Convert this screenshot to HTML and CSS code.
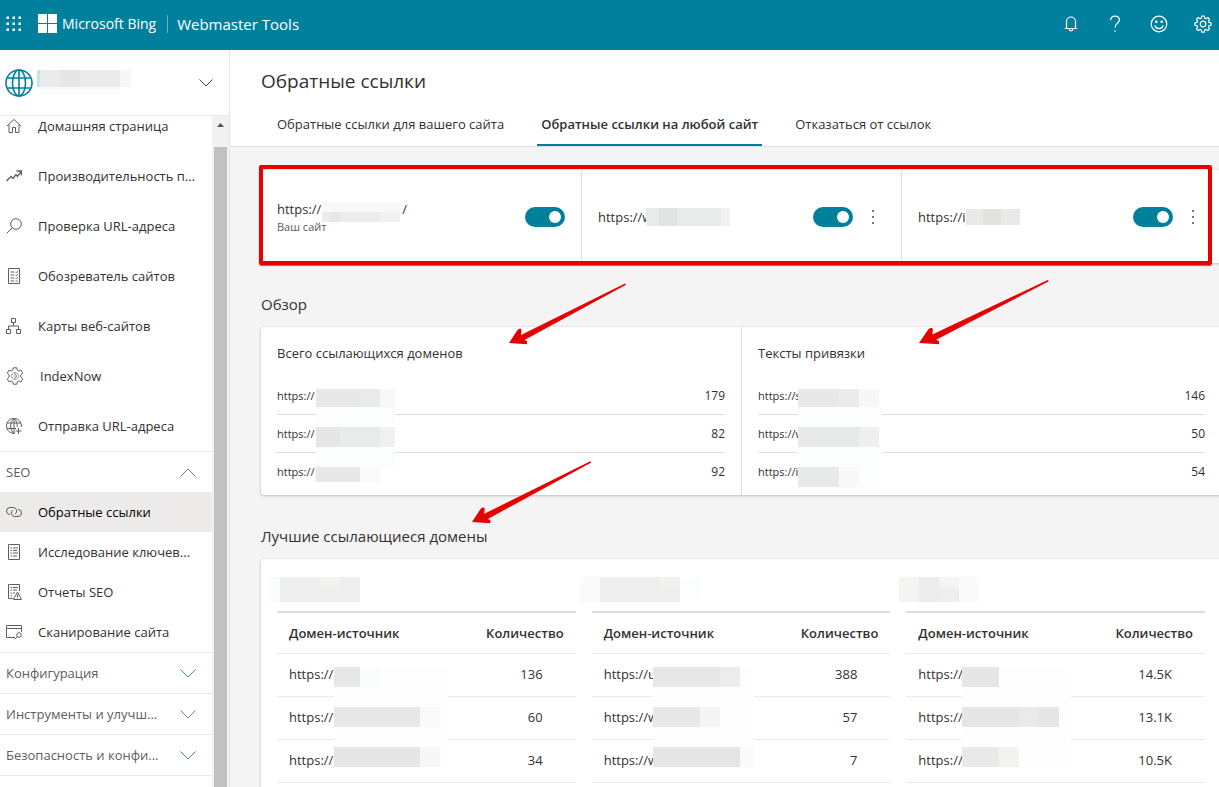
FILE: index.html
```html
<!DOCTYPE html>
<html lang="ru">
<head>
  <meta charset="UTF-8" />
  <meta name="viewport" content="width=device-width, initial-scale=1.0"/>
  <title>Обратные ссылки — Webmaster Tools</title>
  <link rel="stylesheet" href="styles.css">
</head>
<body>
  <header class="topbar">
    <button class="waffle" aria-label="Меню приложений">
      <svg width="16" height="16" viewBox="0 0 16 16" fill="#fff">
        <path d="M.5.5h2.500v2.500H.5zM6.500.5H9v2.500H6.500zM12.500.5H15v2.500h-2.500zM.5 6.500h2.500V9H.5zM6.500 6.500H9V9H6.500zM12.500 6.500H15V9h-2.500zM.5 12.500h2.500V15H.5zM6.500 12.500H9V15H6.500zM12.500 12.500H15V15h-2.500z"/>
      </svg>
    </button>
    <a class="brand" href="#">
      <svg width="19" height="19" viewBox="0 0 19 19" fill="#fff"><path d="M0 0h9v9H0zM10 0h9v9h-9zM0 10h9v9H0zM10 10h9v9h-9z"/></svg>
      <span class="brand-name">Microsoft Bing</span>
      <span class="product">Webmaster Tools</span>
    </a>
    <div class="top-actions">
      <button aria-label="Уведомления">
        <svg width="16" height="18" viewBox="0 0 16 18" fill="none" stroke="#fff" stroke-width="1.2"><path d="M3.5 13.5V6.5a4.5 4.5 0 0 1 9 0v7M1.8 13.5h12.4M6.2 14a1.8 1.8 0 0 0 3.6 0"/></svg>
      </button>
      <button aria-label="Справка">
        <svg width="12" height="18" viewBox="0 0 12 18" fill="none" stroke="#fff" stroke-width="1.2"><path d="M1.6 5.2C1.6 2.6 3.4 1.2 6 1.2s4.4 1.5 4.4 3.9C10.400 8.300 6 8.500 6 12.800M6 15.200v1.600"/></svg>
      </button>
      <button aria-label="Отзыв">
        <svg width="18" height="18" viewBox="0 0 18 18" fill="none" stroke="#fff" stroke-width="1.2"><circle cx="9" cy="9" r="7.800"/><path d="M4.800 10.500a4.400 4.400 0 0 0 8.400 0"/><circle cx="6.300" cy="6.800" r=".7" fill="#fff"/><circle cx="11.700" cy="6.800" r=".7" fill="#fff"/></svg>
      </button>
      <button aria-label="Параметры">
        <svg width="18" height="18" viewBox="0 0 18 18" fill="none" stroke="#fff" stroke-width="1.2" stroke-linejoin="round"><path d="M7.700 1h2.600l.4 2.100 1.300.6 1.800-1.200 1.800 1.800-1.200 1.800.6 1.300 2.100.4v2.500l-2.100.4-.6 1.300 1.200 1.800-1.800 1.800-1.800-1.200-1.300.6-.4 2.100H7.700l-.4-2.100-1.300-.6-1.800 1.200-1.800-1.800 1.200-1.800-.6-1.300-2.100-.4V7.800l2.100-.4.600-1.300-1.200-1.800 1.800-1.800 1.800 1.200 1.300-.6z"/><circle cx="9" cy="9" r="2.800"/></svg>
      </button>
    </div>
  </header>

  <div class="layout">
    <aside class="sidebar">
      <button class="site-picker" aria-label="Выбрать сайт">
        <svg width="28" height="28" viewBox="0 0 28 28" fill="none" stroke="#00809d" stroke-width="1.600"><circle cx="14" cy="14" r="13"/><ellipse cx="14" cy="14" rx="6.500" ry="13"/><path d="M14 1v26M2.500 9h23M2.500 19h23"/></svg>
        <svg class="site-name" width="94" height="26" viewBox="0 0 94 26"><path fill="#f7f7f7" d="M0 0h94v17H0z"/><path fill="#ebebeb" d="M0 0h83v17H0z"/><path fill="#e6e6e6" d="M23 0h20v17H23z"/><path fill="#c9e3ea" d="M0 0h3v17H0z"/><path fill="#fbfdfd" d="M3 17h80v8H3z"/></svg>
        <svg width="14" height="8" viewBox="0 0 14 8" fill="none" stroke="#444"><path d="M.5.5 7 7 13.500.5"/></svg>
      </button>

      <div class="nav-scroll">
        <nav class="nav">
          <a class="item" href="#">
            <svg width="16" height="16" viewBox="0 0 16 16"><path d="M1 8 8 1.500 15 8M3 6.500v8h3.500V9.500h3v5H13v-8"/></svg>
            Домашняя страница
          </a>
          <a class="item" href="#">
            <svg width="16" height="16" viewBox="0 0 16 16"><path stroke-width="1.300" d="M.5 13 5 8.500l2 2L10 6.500l1.500 2L15.500 3M10.500 3h5v4.500"/></svg>
            Производительность п...
          </a>
          <a class="item" href="#">
            <svg width="16" height="16" viewBox="0 0 16 16"><circle cx="10" cy="6" r="5.300"/><path d="M6.200 9.800.5 15.500"/></svg>
            Проверка URL-адреса
          </a>
          <a class="item" href="#">
            <svg width="16" height="16" viewBox="0 0 16 16"><path d="M2.500.5h11v15h-11zM4.500 4H8M4.500 7H8M4.500 10H8M4.500 13H8M9.500 4l.8.8L12 3.200M9.500 7l.8.8L12 6.200M9.500 10l.8.8L12 9.200M9.500 13h2"/></svg>
            Обозреватель сайтов
          </a>
          <a class="item" href="#">
            <svg width="16" height="16" viewBox="0 0 16 16"><path d="M5.500.5h4v4h-4zM.5 11.500h4v4h-4zM10.500 11.500h4v4h-4zM7.500 4.500V8M2.500 11.500V8h10v3.500"/></svg>
            Карты веб-сайтов
          </a>
          <a class="item" href="#">
            <svg width="18" height="18" viewBox="0 0 18 18"><path d="M7.200.8h3.600l.5 2.400 1.200.7 2.400-.8 1.800 3.100-1.900 1.700v2.200l1.900 1.700-1.800 3.100-2.400-.8-1.200.7-.5 2.400H7.200l-.5-2.400-1.200-.7-2.400.8-1.800-3.100 1.900-1.700V7.900L1.300 6.200l1.800-3.100 2.400.8 1.200-.7z"/><g stroke="#a19f9d"><circle cx="9" cy="9" r="3.500"/><path d="M9 5.500v7M9 7l2 2-2 2"/></g></svg>
            IndexNow
          </a>
          <a class="item" href="#">
            <svg width="16" height="16" viewBox="0 0 16 16"><path d="M15.300 9A7.500 7.500 0 1 0 9 15.300M8 .5c-4.500 4-4.500 11 0 15M8 .5c2.500 2.300 3.500 5 3.300 8.500M1 5h14M1 10.500h9M8 .5v15M12.500 10v6M9.500 13h6"/></svg>
            Отправка URL-адреса
          </a>

          <button class="group" aria-expanded="true">SEO
            <svg width="16" height="9" viewBox="0 0 16 9"><path d="M.5 8.500 8 1l7.500 7.500"/></svg>
          </button>
          <a class="item sub active" href="#">
            <svg width="16" height="16" viewBox="0 0 16 16"><path d="M4 10.500a3.500 3.500 0 0 1 0-7h3.500a3.500 3.500 0 0 1 1.500 6.500M12 5.500a3.500 3.500 0 0 1 0 7H8.500A3.500 3.500 0 0 1 7 6"/></svg>
            Обратные ссылки
          </a>
          <a class="item sub" href="#">
            <svg width="16" height="16" viewBox="0 0 16 16"><path d="M2.500.5h11v15h-11zM4.500 4H6M7 4h5M4.500 6.500H6M7 6.500h4M4.500 9H6M7 9h5M4.500 12H6M7 12h4"/></svg>
            Исследование ключев...
          </a>
          <a class="item sub" href="#">
            <svg width="16" height="16" viewBox="0 0 16 16"><path d="M13.500 7V.5h-11v14H7M4.500 3.500H6M7 3.500h5M4.500 6H6M7 6h4M4.500 9H6M7 9h2M4.500 12H6M11.500 8l4 7.500h-8zM11.500 10.500V13M11.500 13.500v1"/></svg>
            Отчеты SEO
          </a>
          <a class="item sub" href="#">
            <svg width="16" height="16" viewBox="0 0 16 16"><path d="M9 13.500H.5v-12h15V8M.5 4.500h15"/><circle cx="13" cy="11" r="2.300"/><path d="m11.300 12.700-2.600 2.600"/></svg>
            Сканирование сайта
          </a>

          <button class="group" aria-expanded="false">Конфигурация
            <svg class="blue" width="16" height="9" viewBox="0 0 16 9"><path d="M.5.5 8 8 15.500.5"/></svg>
          </button>
          <button class="group" aria-expanded="false">Инструменты и улучш...
            <svg width="16" height="9" viewBox="0 0 16 9"><path d="M.5.5 8 8 15.500.5"/></svg>
          </button>
          <button class="group" aria-expanded="false">Безопасность и конфи...
            <svg class="blue" width="16" height="9" viewBox="0 0 16 9"><path d="M.5.5 8 8 15.500.5"/></svg>
          </button>
        </nav>
        <div class="scrollbar">
          <svg width="7" height="4" viewBox="0 0 7 4" fill="#505050"><path d="M0 4 3.500 0 7 4z"/></svg>
          <div class="thumb"></div>
        </div>
      </div>
    </aside>

    <main class="main">
      <div class="page-head">
        <h1>Обратные ссылки</h1>
        <div class="tabs" role="tablist">
          <button class="tab" role="tab">Обратные ссылки для вашего сайта</button>
          <button class="tab selected" role="tab" aria-selected="true">Обратные ссылки на любой сайт</button>
          <button class="tab" role="tab">Отказаться от ссылок</button>
        </div>
      </div>

      <div class="content">
        <section class="card sites">
          <div class="site">
            <label class="site-url" for="site1">https://<svg class="gap" width="80" height="20" viewBox="0 0 80 20"><path fill="#f8f8f8" d="M0 0h78v10H0z"/><path fill="#ececec" d="M0 10h78v10H0z"/><path fill="#e6e6e6" d="M8 10h10v10H8z"/><path fill="#f1f1f1" d="M58 10h20v10H58z"/></svg>/
              <small>Ваш сайт</small>
            </label>
            <input class="toggle" type="checkbox" id="site1" checked>
          </div>
          <div class="site">
            <label class="site-url" for="site2">https://w
              <svg class="mask url-mask" width="84" height="18" viewBox="0 0 84 18"><path fill="#e9eaea" d="M0 0h84v18H0z"/><path fill="#e2e4e2" d="M13 0h18v18H13z"/><path fill="#f1f1f1" d="M75 0h9v18h-9z"/></svg>
            </label>
            <input class="toggle" type="checkbox" id="site2" checked>
            <button class="more" aria-label="Ещё"><svg width="2" height="14" viewBox="0 0 2 14" fill="#797775"><path d="M0 0h2v2H0zM0 6h2v2H0zM0 12h2v2H0z"/></svg></button>
          </div>
          <div class="site">
            <label class="site-url" for="site3">https://i
              <svg class="mask url-mask" width="54" height="18" viewBox="0 0 54 18"><path fill="#e9e9e9" d="M0 1h54v16H0z"/><path fill="#e2e3e1" d="M17 1h18v16H17z"/></svg>
            </label>
            <input class="toggle" type="checkbox" id="site3" checked>
            <button class="more" aria-label="Ещё"><svg width="2" height="14" viewBox="0 0 2 14" fill="#797775"><path d="M0 0h2v2H0zM0 6h2v2H0zM0 12h2v2H0z"/></svg></button>
          </div>
          <div class="highlight"></div>
        </section>

        <h2>Обзор</h2>
        <section class="card overview">
          <div class="summary">
            <h3>Всего ссылающихся доменов</h3>
            <ul>
              <li><span>https://</span><b>179</b></li>
              <li><span>https://</span><b>82</b></li>
              <li><span>https://</span><b>92</b></li>
            </ul>
            <svg class="mask list-mask" width="79" height="94" viewBox="0 0 79 94">
              <path fill="#fcfdfd" d="M0 0h79v80H0z"/>
              <path fill="#e8e8e8" d="M0 0h44v18H0z"/><path fill="#e9eaea" d="M44 0h20v18H44z"/><path fill="#f8f8f8" d="M64 0h15v18H64z"/>
              <path fill="#e6e6e6" d="M0 38h24v20H0z"/><path fill="#e9eaea" d="M24 38h40v20H24z"/><path fill="#f0f0f0" d="M64 38h15v20H64z"/>
              <path fill="#e8e8e8" d="M0 78h44v15H0z"/><path fill="#fafafa" d="M44 78h20v15H44z"/>
            </svg>
          </div>
          <div class="summary">
            <h3>Тексты привязки</h3>
            <ul>
              <li><span>https://s</span><b>146</b></li>
              <li><span>https://w</span><b>50</b></li>
              <li><span>https://i</span><b>54</b></li>
            </ul>
            <svg class="mask list-mask" width="86" height="99" viewBox="0 0 86 99">
              <path fill="#fcfdfd" d="M1 0h84v99H1z"/>
              <path fill="#e8e8e8" d="M1 0h41v18H1z"/><path fill="#edebea" d="M42 0h20v18H42z"/><path fill="#f7f7f7" d="M62 0h20v18H62z"/>
              <path fill="#e8e9e9" d="M1 38h61v20H1z"/><path fill="#efefef" d="M62 38h20v20H62z"/>
              <path fill="#e8e9e9" d="M1 78h41v20H1z"/><path fill="#f8f8f8" d="M42 78h20v20H42z"/>
            </svg>
          </div>
        </section>

        <h2>Лучшие ссылающиеся домены</h2>
        <section class="card domains">
          <div class="domain">
            <table>
              <thead><tr><th>Домен-источник</th><th>Количество</th></tr></thead>
              <tbody>
                <tr><td>https://</td><td>136</td></tr>
                <tr><td>https://</td><td>60</td></tr>
                <tr><td>https://</td><td>34</td></tr>
              </tbody>
            </table>
            <svg class="mask domain-mask" width="190" height="192" viewBox="0 0 190 192">
              <path fill="#fafbfb" d="M4 0h11v25H4z"/><path fill="#eee" d="M15 0h80v25H15z"/><path fill="#f2f2ef" d="M55 0h20v10H55z"/>
              <path fill="#fefefe" d="M69 90h114v101H69z"/>
              <path fill="#e7e7e7" d="M69 90h26v20H69z"/><path fill="#fbfdfd" d="M95 90h20v20H95z"/>
              <path fill="#e7e7e7" d="M69 130h86v20H69z"/><path fill="#f9f9f9" d="M155 130h20v20h-20z"/>
              <path fill="#e5e5e5" d="M69 170h86v20H69z"/><path fill="#f7f7f7" d="M155 170h20v20h-20z"/>
            </svg>
          </div>
          <div class="domain">
            <table>
              <thead><tr><th>Домен-источник</th><th>Количество</th></tr></thead>
              <tbody>
                <tr><td>https://u</td><td>388</td></tr>
                <tr><td>https://w</td><td>57</td></tr>
                <tr><td>https://w</td><td>7</td></tr>
              </tbody>
            </table>
            <svg class="mask domain-mask" width="190" height="192" viewBox="0 0 190 192">
              <path fill="#fafafa" d="M0 0h20v25H0z"/><path fill="#eee" d="M20 0h80v25H20z"/><path fill="#f2f2ef" d="M80 0h20v10H80z"/><path fill="#fcfdfd" d="M100 0h20v25h-20z"/>
              <path fill="#fefefe" d="M73 90h101v101H73z"/>
              <path fill="#e7e7e7" d="M73 90h67v20H73z"/><path fill="#ececec" d="M140 90h20v20h-20z"/>
              <path fill="#e8e8e8" d="M73 130h47v20H73z"/><path fill="#f5f5f5" d="M120 130h20v20h-20z"/>
              <path fill="#e5e5e5" d="M73 170h87v20H73z"/><path fill="#fafafa" d="M160 170h14v20h-14z"/>
            </svg>
          </div>
          <div class="domain">
            <table>
              <thead><tr><th>Домен-источник</th><th>Количество</th></tr></thead>
              <tbody>
                <tr><td>https://</td><td>14.5K</td></tr>
                <tr><td>https://</td><td>13.1K</td></tr>
                <tr><td>https://</td><td>10.5K</td></tr>
              </tbody>
            </table>
            <svg class="mask domain-mask" width="190" height="192" viewBox="0 0 190 192">
              <path fill="#f4f4f3" d="M5 0h60v25H5z"/><path fill="#ececec" d="M25 0h20v25H25z"/><path fill="#eee" d="M45 10h20v15H45z"/><path fill="#fafafa" d="M65 0h20v25H65z"/>
              <path fill="#fefefe" d="M68 90h109v101H68z"/>
              <path fill="#e6e6e6" d="M68 90h37v20H68z"/>
              <path fill="#e5e5e5" d="M68 130h97v20H68z"/><path fill="#eaeaea" d="M125 130h20v20h-20z"/>
              <path fill="#e8e9e9" d="M68 170h37v20H68z"/><path fill="#f2f2f0" d="M105 170h20v20h-20z"/>
            </svg>
          </div>
        </section>

        <svg class="arrows" width="800" height="260" viewBox="0 0 800 260">
          <defs>
            <path id="arrow" d="M0 0 8.500-13q3-3 4 0l-.5 5L116-59.500l1 1.200L15.500-3l2.500 1.200v3z"/>
          </defs>
          <use href="#arrow" x="248" y="73"/>
          <use href="#arrow" transform="translate(658 73) scale(1.110 1.060)"/>
          <use href="#arrow" transform="translate(211 252) scale(1.020 1.020)"/>
        </svg>
      </div>
    </main>
  </div>
</body>
</html>
```
FILE: styles.css
```css
* {
  box-sizing: border-box;
}

body {
  margin: 0;
  height: 100vh;
  display: flex;
  flex-direction: column;
  overflow: hidden;
  font-family: 'Segoe UI', 'Open Sans', sans-serif;
  font-size: 13px;
  line-height: 20px;
  color: #323130;
  background: #f4f4f4;
}

button {
  font: inherit;
  color: inherit;
  border: none;
  background: none;
  padding: 0;
  cursor: pointer;
}

a {
  color: inherit;
  text-decoration: none;
}

/* top bar */
.topbar {
  flex: none;
  height: 50px;
  display: flex;
  align-items: center;
  background: #00809d;
  color: #fff;
  padding-bottom: 3px;
}

.waffle {
  display: flex;
  padding: 0 16px 0 6px;
}

.brand {
  display: flex;
  align-items: center;
  font-weight: 500;
}

.brand-name {
  margin: 0 11px 0 5px;
  font-size: 14px;
}

.product {
  border-left: 1px solid #66b3c4;
  padding-left: 9px;
  font-size: 15px;
  line-height: 18px;
}

.top-actions {
  margin-left: auto;
  display: flex;
  gap: 12px;
}

.top-actions button {
  width: 32px;
  height: 32px;
  display: flex;
  align-items: center;
  justify-content: center;
}

/* sidebar */
.layout {
  flex: 1;
  display: flex;
  min-height: 0;
}

.sidebar {
  flex: none;
  width: 230px;
  display: flex;
  flex-direction: column;
  background: #fff;
  border-right: 1px solid #e6e6e6;
}

.site-picker {
  flex: none;
  height: 66px;
  display: flex;
  align-items: center;
  padding: 0 16px 0 5px;
  border-bottom: 1px solid #e6e6e6;
}

.site-name {
  margin: 0 auto 0 4px;
}

.nav-scroll {
  flex: 1;
  display: flex;
  min-height: 0;
  overflow: hidden;
}

.nav {
  flex: 1;
  margin-top: -15px;
}

.item {
  height: 50px;
  display: flex;
  align-items: center;
  gap: 16px;
  padding-left: 6px;
  white-space: nowrap;
}

.item svg {
  fill: none;
  stroke: #605e5c;
}

.sub {
  height: 40px;
}

.active {
  background: #edebe9;
  color: #000;
}

.group {
  width: 100%;
  height: 41px;
  display: flex;
  align-items: center;
  justify-content: space-between;
  padding: 0 16px 0 6px;
  border-top: 1px solid #e6e6e6;
  color: #605e5c;
  white-space: nowrap;
}

.group:last-child {
  height: 42px;
  border-bottom: 1px solid #e6e6e6;
}

.group svg {
  fill: none;
  stroke: #8a7f6a;
}

.group .blue {
  stroke: #4a8aa8;
}

.scrollbar {
  width: 17px;
  display: flex;
  flex-direction: column;
  align-items: center;
  background: #f1f1f1;
  padding-top: 7px;
}

.thumb {
  flex: 1;
  width: 13px;
  margin-top: 20px;
  background: #c1c1c1;
}

/* page */
.main {
  flex: 1;
  min-width: 0;
  overflow: hidden;
}

.page-head {
  height: 97px;
  background: #fff;
  border-bottom: 1px solid #dedede;
  padding: 18px 31px 0;
}

h1, h2, h3 {
  margin: 0;
  font-weight: 400;
}

h1 {
  font-size: 19px;
  line-height: 26px;
}

.tabs {
  display: flex;
  gap: 29px;
  padding: 10px 12px 0;
}

.tab {
  height: 42px;
  padding: 0 4px;
  border-bottom: 2px solid transparent;
}

.selected {
  font-weight: 600;
  border-color: #00809d;
}

.content {
  position: relative;
  min-width: 991px;
  padding: 23px 0 0 31px;
}

.card {
  background: #fff;
  border-radius: 2px;
  box-shadow: 0 0 1px rgba(0, 0, 0, 0.25), 0 1px 3px rgba(0, 0, 0, 0.2);
}

h2 {
  font-size: 15px;
  line-height: 24px;
  margin: 29px 0 11px;
}

.mask {
  position: absolute;
}

/* compared sites */
.sites {
  position: relative;
  display: grid;
  grid-template-columns: repeat(3, 1fr);
}

.site {
  height: 93px;
  display: flex;
  align-items: center;
  gap: 8px;
  padding: 0 16px;
}

.site + .site,
.summary + .summary {
  border-left: 1px solid #dedede;
}

.site-url {
  position: relative;
  flex: 1;
}

.site-url small {
  display: block;
  font-size: 11px;
  line-height: 16px;
  color: #605e5c;
}

.gap {
  vertical-align: -4px;
  margin: -4px 0 -4px 1px;
}

.url-mask {
  left: 48px;
  top: 1px;
}

.toggle {
  appearance: none;
  width: 40px;
  height: 20px;
  margin: 0;
  border-radius: 10px;
  background: #00809d;
  display: flex;
  align-items: center;
  justify-content: flex-end;
  padding: 0 4px;
}

.toggle::before {
  content: "";
  width: 12px;
  height: 12px;
  border-radius: 50%;
  background: #fff;
}

.more {
  width: 24px;
  height: 24px;
  display: flex;
  align-items: center;
  justify-content: center;
}

.highlight {
  position: absolute;
  inset: -5px 9px -2px -2px;
  border: 4px solid #e60000;
  border-radius: 2px;
  box-shadow: 0 1px 1px rgba(0, 0, 0, 0.5);
  pointer-events: none;
}

/* overview */
.overview {
  display: grid;
  grid-template-columns: 1fr 1fr;
}

.summary {
  position: relative;
  padding: 16px 16px 4px;
}

.summary h3 {
  font-size: 13px;
  margin-bottom: 14px;
}

.summary ul {
  list-style: none;
  margin: 0;
  padding: 0;
}

.summary li {
  height: 38px;
  display: flex;
  align-items: center;
  justify-content: space-between;
  border-bottom: 1px solid #dedede;
  font-size: 11px;
}

.summary li:last-child {
  border-bottom: none;
}

.summary b {
  font-size: 12px;
  font-weight: 500;
}

.list-mask {
  left: 55px;
  top: 62px;
}

/* top domains */
.domains {
  display: grid;
  grid-template-columns: repeat(3, 1fr);
  gap: 16px;
  padding: 52px 16px 16px;
}

.domain {
  position: relative;
}

table {
  width: 100%;
  border-collapse: collapse;
  border-top: 2px solid #dedede;
}

th, td {
  padding: 0 12px;
  text-align: left;
  border-bottom: 1px solid #edebe9;
}

th {
  height: 41px;
  font-weight: 600;
}

td {
  height: 43px;
  padding-bottom: 2px;
}

th:last-child {
  text-align: right;
}

td:last-child {
  text-align: right;
  padding-right: 33px;
}

.domain-mask {
  left: -12px;
  top: -34px;
}

/* callout arrows */
.arrows {
  position: absolute;
  left: 31px;
  top: 123px;
  fill: #e60000;
  pointer-events: none;
}
```
